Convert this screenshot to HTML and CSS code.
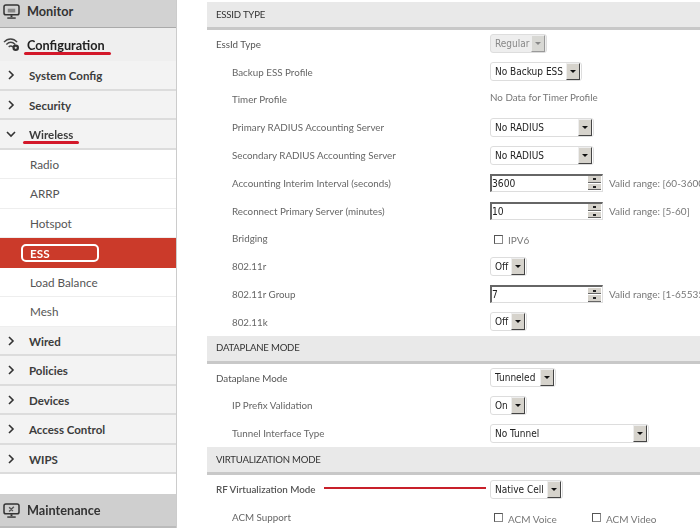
FILE: index.html
```html
<!DOCTYPE html>
<html lang="en">
<head>
<meta charset="utf-8">
<title>ESS</title>
<link rel="stylesheet" href="styles.css">
</head>
<body>
<div class="page">
  <nav class="sidebar">
    <div class="top monitor">
      <svg class="ticon" viewBox="0 0 18 16"><rect x="1" y="1" width="16" height="10.500" rx="2" fill="none" stroke="#333" stroke-width="1.600"/><path d="M5 9V5h8v4z" fill="#888"/><path d="M9 12v2" stroke="#333" stroke-width="2"/><path d="M4.500 15h9" stroke="#333" stroke-width="1.500"/></svg>
      <span>Monitor</span>
    </div>
    <div class="top config">
      <svg class="ticon" viewBox="0 0 18 16"><path d="M1 5.500c4-4.500 10-4.500 14 0M3.500 8c3-3 6.500-3 9.500 0M6 10.500c1.500-1.300 3-1.300 4.500 0" fill="none" stroke="#444" stroke-width="1.500"/><circle cx="13.500" cy="11.500" r="3.500" fill="#333"/><circle cx="13.500" cy="11.500" r="1.200" fill="#ddd"/></svg>
      <span class="marked mark-config">Configuration</span>
    </div>
    <div class="item"><svg class="chev" viewBox="0 0 10 10"><path d="M3 1l4 4-4 4"/></svg><span>System Config</span></div>
    <div class="item"><svg class="chev" viewBox="0 0 10 10"><path d="M3 1l4 4-4 4"/></svg><span>Security</span></div>
    <div class="item"><svg class="chev" viewBox="0 0 10 10"><path d="M1 3l4 4 4-4"/></svg><span class="marked mark-wireless">Wireless</span></div>
    <div class="sub">Radio</div>
    <div class="sub">ARRP</div>
    <div class="sub">Hotspot</div>
    <div class="sub active"><span class="ess">ESS</span></div>
    <div class="sub">Load Balance</div>
    <div class="sub">Mesh</div>
    <div class="item"><svg class="chev" viewBox="0 0 10 10"><path d="M3 1l4 4-4 4"/></svg><span>Wired</span></div>
    <div class="item"><svg class="chev" viewBox="0 0 10 10"><path d="M3 1l4 4-4 4"/></svg><span>Policies</span></div>
    <div class="item"><svg class="chev" viewBox="0 0 10 10"><path d="M3 1l4 4-4 4"/></svg><span>Devices</span></div>
    <div class="item"><svg class="chev" viewBox="0 0 10 10"><path d="M3 1l4 4-4 4"/></svg><span>Access Control</span></div>
    <div class="item"><svg class="chev" viewBox="0 0 10 10"><path d="M3 1l4 4-4 4"/></svg><span>WIPS</span></div>
    <div class="spacer"></div>
    <div class="top maint">
      <svg class="ticon" viewBox="0 0 18 16"><rect x="1" y="1" width="16" height="10.500" rx="2" fill="none" stroke="#333" stroke-width="1.600"/><path d="M6.500 9l5-5M6.500 4.500l4 4" stroke="#555" stroke-width="1.500"/><path d="M9 12v2" stroke="#333" stroke-width="2"/><path d="M4.500 15h9" stroke="#333" stroke-width="1.500"/></svg>
      <span>Maintenance</span>
    </div>
  </nav>
  <main class="main">
    <h2 class="head">ESSID TYPE</h2>
    <div class="row"><label class="lab top-lab">EssId Type</label><div class="ctl"><span class="sel dis w57"><span class="val">Regular</span><i class="btn"></i></span></div></div>
    <div class="row"><label class="lab">Backup ESS Profile</label><div class="ctl"><span class="sel w92"><span class="val">No Backup ESS</span><i class="btn"></i></span></div></div>
    <div class="row"><label class="lab">Timer Profile</label><div class="ctl"><span class="nodata">No Data for Timer Profile</span></div></div>
    <div class="row"><label class="lab">Primary RADIUS Accounting Server</label><div class="ctl"><span class="sel w104"><span class="val">No RADIUS</span><i class="btn"></i></span></div></div>
    <div class="row"><label class="lab">Secondary RADIUS Accounting Server</label><div class="ctl"><span class="sel w104"><span class="val">No RADIUS</span><i class="btn"></i></span></div></div>
    <div class="row"><label class="lab">Accounting Interim Interval (seconds)</label><div class="ctl"><span class="spin"><span class="num">3600</span><i class="arrows"><b></b><b></b></i></span><span class="hint">Valid range: [60-3600]</span></div></div>
    <div class="row"><label class="lab">Reconnect Primary Server (minutes)</label><div class="ctl"><span class="spin"><span class="num">10</span><i class="arrows"><b></b><b></b></i></span><span class="hint">Valid range: [5-60]</span></div></div>
    <div class="row"><label class="lab">Bridging</label><div class="ctl"><span class="check"><i class="box"></i>IPV6</span></div></div>
    <div class="row"><label class="lab">802.11r</label><div class="ctl"><span class="sel w37"><span class="val">Off</span><i class="btn"></i></span></div></div>
    <div class="row"><label class="lab">802.11r Group</label><div class="ctl"><span class="spin"><span class="num">7</span><i class="arrows"><b></b><b></b></i></span><span class="hint">Valid range: [1-65535]</span></div></div>
    <div class="row"><label class="lab">802.11k</label><div class="ctl"><span class="sel w37"><span class="val">Off</span><i class="btn"></i></span></div></div>
    <h2 class="head">DATAPLANE MODE</h2>
    <div class="row"><label class="lab top-lab">Dataplane Mode</label><div class="ctl"><span class="sel w66"><span class="val">Tunneled</span><i class="btn"></i></span></div></div>
    <div class="row"><label class="lab">IP Prefix Validation</label><div class="ctl"><span class="sel w37"><span class="val">On</span><i class="btn"></i></span></div></div>
    <div class="row"><label class="lab">Tunnel Interface Type</label><div class="ctl"><span class="sel w159"><span class="val">No Tunnel</span><i class="btn"></i></span></div></div>
    <h2 class="head">VIRTUALIZATION MODE</h2>
    <div class="row"><label class="lab top-lab strong">RF Virtualization Mode</label><i class="redline"></i><div class="ctl"><span class="sel w73"><span class="val">Native Cell</span><i class="btn"></i></span></div></div>
    <div class="row"><label class="lab">ACM Support</label><div class="ctl acm"><span class="check c98"><i class="box"></i>ACM Voice</span><span class="check"><i class="box"></i>ACM Video</span></div></div>
  </main>
</div>
</body>
</html>
```
FILE: styles.css
```css
html, body { margin: 0; padding: 0; background: #fff; }
.page { display: flex; width: 700px; height: 528px; overflow: hidden; font-family: Lato, "Open Sans", sans-serif; color: #444; filter: blur(0.35px); }

.sidebar { width: 176px; flex: none; height: 528px; display: flex; flex-direction: column; border-right: 1px solid #ccc; background: #fff; }
.top { display: flex; align-items: center; gap: 7px; padding-left: 3px; font-size: 12.700px; font-weight: 700; color: #333; box-sizing: border-box; flex: none; }
.monitor { height: 28px; background: #d2d2d2; border-bottom: 1px solid #aaa; padding-bottom: 5px; }
.config { height: 33px; background: #efefef; color: #222; }
.maint { height: 34px; background: #cfcfcf; border-bottom: 2px solid #bbb; }
.ticon { width: 17px; height: 15px; flex: none; }
.item { height: 29.500px; box-sizing: border-box; display: flex; align-items: center; background: #f3f3f3; border-bottom: 2px solid #dcdcdc; font-size: 11.500px; font-weight: 700; color: #3c3c3c; flex: none; padding-top: 2px; }
.chev { width: 10px; height: 10px; margin: -1px 13px 0 6px; fill: none; stroke: #333; stroke-width: 1.600; flex: none; }
.sub { height: 29.500px; box-sizing: border-box; display: flex; align-items: center; padding-left: 30px; font-size: 11.700px; color: #555; background: #fff; border-bottom: 1px solid #eee; flex: none; }
.sub.active { background: #cb3a2a; color: #fff; font-weight: 700; border-bottom: 0; position: relative; }
.ess { position: relative; }
.ess::after { content: ""; position: absolute; left: -9px; top: -2px; width: 74px; height: 14px; border: 2px solid #fff; border-radius: 5px; }
.spacer { height: 20px; flex: none; }
.marked { position: relative; }
.marked::after { content: ""; position: absolute; height: 3px; background: #d3182a; border-radius: 2px; }
.mark-config::after { left: -3px; right: -6px; bottom: -2px; }
.mark-wireless::after { left: -6px; right: -6px; bottom: -3px; }

.main { margin-left: 30px; width: 493px; flex: none; padding-top: 2px; font-size: 9.800px; }
.head { margin: 0; height: 28px; box-sizing: border-box; padding: 0 0 1px 9px; display: flex; align-items: center; background: #e9e9e9; border-bottom: 3px solid #c8c8c8; font-size: 9.600px; letter-spacing: -0.200px; font-weight: 400; color: #333; }
.row { height: 27.800px; display: flex; align-items: center; position: relative; }
.lab { width: 258px; padding-left: 25px; flex: none; color: #666; }
.top-lab { padding-left: 9px; width: 274px; color: #555; }
.strong { font-weight: 600; }
.ctl { display: flex; align-items: center; }

.sel { display: inline-flex; align-items: center; justify-content: space-between; height: 19px; box-sizing: border-box; background: #fff; border: 1px solid #ddd; border-radius: 3px; padding: 0 1px 0 4px; font-family: "DejaVu Sans Condensed", "DejaVu Sans", sans-serif; font-size: 10px; color: #222; white-space: nowrap; }
.sel.dis { background: #eee; color: #888; }
.btn { width: 14px; height: 17px; flex: none; box-sizing: border-box; background: #d6d3cc; border: 1px solid; border-color: #eee #444 #444 #eee; position: relative; }
.btn::after { content: ""; position: absolute; left: 3px; top: 6px; border: 3px solid transparent; border-top: 3px solid #111; border-bottom: 0; }
.dis .btn { background: #d8d8d4; border-color: #eee #999 #999 #eee; }
.dis .btn::after { border-top-color: #888; }
.w37 { width: 37px; } .w57 { width: 57px; } .w66 { width: 66px; } .w73 { width: 73px; } .w92 { width: 92px; } .w104 { width: 104px; } .w159 { width: 159px; }

.nodata { color: #777; font-size: 9.800px; position: relative; top: -2px; }
.spin { display: inline-flex; align-items: center; justify-content: space-between; width: 113px; height: 18px; box-sizing: border-box; border: 1px solid #ddd; border-top: 2px solid #666; border-left: 2px solid #666; font-family: "DejaVu Sans Condensed", "DejaVu Sans", sans-serif; font-size: 10.200px; color: #222; padding-right: 1px; flex: none; }
.arrows { width: 13px; height: 14px; display: flex; flex-direction: column; gap: 1px; }
.arrows b { flex: 1; background: #d6d3cc; position: relative; border-bottom: 1px solid #666; }
.arrows b::after { content: ""; position: absolute; left: 5px; top: 2px; width: 3px; height: 2px; background: #222; }
.hint { margin-left: 6px; color: #777; font-size: 10px; white-space: nowrap; }
.check { display: inline-flex; align-items: center; color: #777; font-size: 10px; padding-left: 4px; white-space: nowrap; position: relative; top: 2px; }
.box { width: 9px; height: 9px; box-sizing: border-box; border: 1px solid #888; border-top-color: #555; border-left-color: #555; margin-right: 5px; position: relative; top: -1px; }
.c98 { width: 98px; box-sizing: border-box; }
.redline { position: absolute; left: 117px; top: 12px; width: 162px; height: 2px; background: #c8202a; }
```
